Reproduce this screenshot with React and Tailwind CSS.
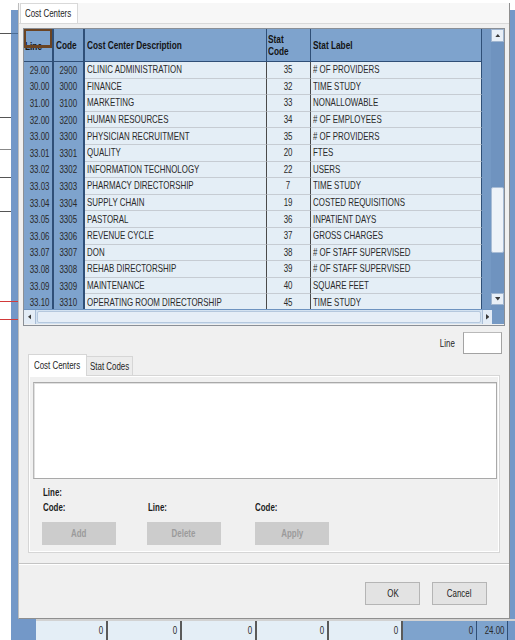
import React from "react";

const rows = [
  ["29.00", "2900", "CLINIC ADMINISTRATION", "35", "# OF PROVIDERS"],
  ["30.00", "3000", "FINANCE", "32", "TIME STUDY"],
  ["31.00", "3100", "MARKETING", "33", "NONALLOWABLE"],
  ["32.00", "3200", "HUMAN RESOURCES", "34", "# OF EMPLOYEES"],
  ["33.00", "3300", "PHYSICIAN RECRUITMENT", "35", "# OF PROVIDERS"],
  ["33.01", "3301", "QUALITY", "20", "FTES"],
  ["33.02", "3302", "INFORMATION TECHNOLOGY", "22", "USERS"],
  ["33.03", "3303", "PHARMACY DIRECTORSHIP", "7", "TIME STUDY"],
  ["33.04", "3304", "SUPPLY CHAIN", "19", "COSTED REQUISITIONS"],
  ["33.05", "3305", "PASTORAL", "36", "INPATIENT DAYS"],
  ["33.06", "3306", "REVENUE CYCLE", "37", "GROSS CHARGES"],
  ["33.07", "3307", "DON", "38", "# OF STAFF SUPERVISED"],
  ["33.08", "3308", "REHAB DIRECTORSHIP", "39", "# OF STAFF SUPERVISED"],
  ["33.09", "3309", "MAINTENANCE", "40", "SQUARE FEET"],
  ["33.10", "3310", "OPERATING ROOM DIRECTORSHIP", "45", "TIME STUDY"],
];

// Narrow text: the grid uses a condensed face, so squeeze regular text horizontally.
function N({ children, o = "left", className = "" }) {
  const origin =
    o === "right" ? "origin-right" : o === "center" ? "origin-center" : "origin-left";
  return (
    <span className={`inline-block whitespace-nowrap scale-x-[0.72] ${origin} ${className}`}>
      {children}
    </span>
  );
}

function Arrow({ dir }) {
  const d = {
    up: "M0 5 L4 0 L8 5 Z",
    down: "M0 0 L8 0 L4 5 Z",
    left: "M5 0 L5 8 L0 4 Z",
    right: "M0 0 L5 4 L0 8 Z",
  }[dir];
  const size = dir === "up" || dir === "down" ? [8, 5] : [5, 8];
  return (
    <svg width={size[0] * 0.7} height={size[1] * 0.7} viewBox={`0 0 ${size[0]} ${size[1]}`}>
      <path d={d} fill="#3a3a3a" />
    </svg>
  );
}

function LeftStrip() {
  return (
    <div className="flex w-[18px] shrink-0">
      <div className="flex w-[11px] flex-col bg-white">
        <div className="h-[34px] border-b border-[#555]" />
        <div className="h-[84px] border-b border-[#555]" />
        <div className="h-[32px] border-b border-[#888]" />
        <div className="h-[28px] border-b border-[#555]" />
        <div className="h-[34px] border-b border-[#555]" />
        <div className="h-[90px] border-b border-[#d23a3a]" />
        <div className="h-[18px] border-b border-[#d23a3a]" />
        <div className="flex-1" />
      </div>
      <div className="flex w-[7px] flex-col">
        <div className="h-[10px] bg-white" />
        <div className="h-[24px] border-b border-[#4b6d96] bg-[#7398c8]" />
        <div className="h-[268px] border-b border-[#d23a3a] bg-[#7398c8]" />
        <div className="h-[18px] border-b border-[#d23a3a] bg-[#7398c8]" />
        <div className="flex-1 bg-[#7398c8]" />
      </div>
    </div>
  );
}

function GridHeader() {
  return (
    <div className="flex h-[33px] shrink-0 border-b border-[#2f4f77] bg-[#7ea3cd] text-[11.5px] font-bold leading-[12px] text-[#141414]">
      <div className="relative flex w-[30px] items-center border-r-2 border-[#2f4f77] pl-[1px] pt-[2px]">
        <N>Line</N>
        <div className="absolute left-0 top-0 h-[19px] w-full border-2 border-b-[3px] border-[#6b4423]" />
      </div>
      <div className="flex w-[31px] items-center border-r-2 border-[#2f4f77] pl-[2px]">
        <N>Code</N>
      </div>
      <div className="flex w-[182px] items-center border-r border-[#2f4f77] pl-[2px]">
        <N>Cost Center Description</N>
      </div>
      <div className="flex w-[44px] flex-col justify-center border-r border-[#2f4f77] pl-[1px]">
        <N>Stat</N>
        <N>Code</N>
      </div>
      <div className="flex w-[171px] items-center border-r border-[#2f4f77] pl-[2px]">
        <N>Stat Label</N>
      </div>
    </div>
  );
}

function GridRow({ r }) {
  return (
    <div className="flex h-[16.6px] shrink-0 text-[11px] leading-none text-[#2a2a2a]">
      <div className="flex w-[30px] items-center justify-end border-r-2 border-[#2f4f77] bg-[#7ea3cd] pr-[2px]">
        <N o="right">{r[0]}</N>
      </div>
      <div className="flex w-[31px] items-center justify-center border-r-2 border-[#2f4f77] bg-[#7ea3cd]">
        <N o="center">{r[1]}</N>
      </div>
      <div className="flex w-[182px] items-center border-b border-r border-b-[#c6ccd3] border-r-[#4a4a4a] bg-[#e4eef6] pl-[2px]">
        <N>{r[2]}</N>
      </div>
      <div className="flex w-[44px] items-center justify-center border-b border-r border-b-[#c6ccd3] border-r-[#4a4a4a] bg-[#e4eef6]">
        <N o="center">{r[3]}</N>
      </div>
      <div className="flex w-[171px] items-center border-b border-r border-b-[#c6ccd3] border-r-[#2f4f77] bg-[#e4eef6] pl-[2px]">
        <N>{r[4]}</N>
      </div>
    </div>
  );
}

function VScroll() {
  return (
    <div className="flex w-[22px] shrink-0 justify-end bg-[#7599c4]">
      <div className="flex w-[13px] flex-col bg-[#6f93bf]">
        <div className="flex h-[13px] items-center justify-center border border-[#9fb5d0] bg-[#e8eff7]">
          <Arrow dir="up" />
        </div>
        <div className="h-[145px]" />
        <div className="h-[66px] rounded-[2px] border border-[#a9bdd6] bg-[#eef3f9]" />
        <div className="h-[40px]" />
        <div className="flex h-[12px] items-center justify-center border border-[#9fb5d0] bg-[#e8eff7]">
          <Arrow dir="down" />
        </div>
      </div>
    </div>
  );
}

function HScroll() {
  return (
    <div className="flex h-[15px] shrink-0 border-t border-[#6d93c0] bg-[#d3e2f1]">
      <div className="flex w-[12px] items-center justify-center border-r border-[#a9bdd6] bg-[#e3ecf6]">
        <Arrow dir="left" />
      </div>
      <div className="m-[1px] flex-1 rounded-[2px] border border-[#b5c8de] bg-[#e6eef7]" />
      <div className="flex w-[10px] items-center justify-center border-l border-[#a9bdd6] bg-[#e3ecf6]">
        <Arrow dir="right" />
      </div>
      <div className="w-[12px] bg-[#7599c4]" />
    </div>
  );
}

function Grid() {
  return (
    <div className="mx-[4px] mt-[4px] flex h-[298px] flex-col border border-[#8a8f96] bg-[#7ea3cd]">
      <div className="flex h-[280px]">
        <div className="flex w-[458px] flex-col overflow-hidden">
          <GridHeader />
          {rows.map((r) => (
            <GridRow key={r[0]} r={r} />
          ))}
        </div>
        <VScroll />
      </div>
      <HScroll />
      <div className="flex-1 bg-[#f0f0f0]" />
    </div>
  );
}

function GrayButton({ children }) {
  return (
    <div className="flex h-[23px] w-[74px] items-center justify-center bg-[#cccccc] text-[11px] text-[#9b9b9b]">
      <N o="center">{children}</N>
    </div>
  );
}

function Panel() {
  return (
    <div className="ml-[9px] mr-[9px] flex h-[178px] flex-col border border-[#d6d6d6] bg-[#f0f0f0]">
      <div className="flex flex-1 flex-col border border-white">
        <div className="ml-[3px] mr-[1px] mt-[5px] h-[97px] border border-[#a9a9a9] border-l-[#b8b8b8] bg-white shadow-[inset_1px_1px_0_#e0e0e0]" />
        <div className="flex flex-col pl-[12px] pt-[6px] text-[11px] font-bold text-[#1c1c1c]">
          <div className="flex h-[15px] items-center pl-[1px]">
            <N>Line:</N>
          </div>
          <div className="flex">
            <div className="flex w-[105px] flex-col">
              <div className="flex h-[15px] items-center pl-[1px]">
                <N>Code:</N>
              </div>
              <div className="mt-[7px]">
                <GrayButton>Add</GrayButton>
              </div>
            </div>
            <div className="flex w-[108px] flex-col">
              <div className="flex h-[15px] items-center pl-[1px]">
                <N>Line:</N>
              </div>
              <div className="mt-[7px]">
                <GrayButton>Delete</GrayButton>
              </div>
            </div>
            <div className="flex flex-col">
              <div className="flex h-[15px] items-center">
                <N>Code:</N>
              </div>
              <div className="mt-[7px]">
                <GrayButton>Apply</GrayButton>
              </div>
            </div>
          </div>
        </div>
      </div>
    </div>
  );
}

function Dialog() {
  return (
    <div className="flex h-[616px] flex-col border-b border-l border-r border-b-[#8f8f8f] border-l-[#bdbdbd] border-r-[#8f8f8f] bg-[#f0f0f0] shadow-[1px_2px_2px_rgba(0,0,0,0.2)]">
      {/* page tab strip */}
      <div className="flex h-[21px] shrink-0 items-end border-b border-[#d9d9d9] bg-[#f7f7f7] pl-[1px]">
        <div className="flex h-[20px] w-[58px] items-center border-l border-r border-t border-[#d9d9d9] bg-white pl-[4px] text-[11px] text-[#1e1e1e]">
          <N>Cost Centers</N>
        </div>
      </div>

      <Grid />

      {/* line entry */}
      <div className="mt-[6px] flex h-[22px] shrink-0 items-center justify-end gap-[8px] pr-[7px] text-[11px] text-[#1e1e1e]">
        <N o="right">Line</N>
        <div className="h-[22px] w-[39px] border border-[#a3a3a3] border-t-[#b9b9b9] bg-white" />
      </div>

      {/* lower tabs */}
      <div className="flex h-[21px] shrink-0 items-end pl-[9px] text-[11px] text-[#1e1e1e]">
        <div className="relative z-10 -mb-[1px] flex h-[22px] w-[59px] items-center border-l border-r border-t border-[#d6d6d6] bg-white pl-[5px]">
          <N>Cost Centers</N>
        </div>
        <div className="flex h-[19px] w-[46px] items-center border-r border-t border-[#d6d6d6] bg-[#ececec] pl-[3px]">
          <N>Stat Codes</N>
        </div>
      </div>

      <Panel />

      <div className="h-[10px] shrink-0" />

      {/* footer */}
      <div className="flex flex-1 justify-end gap-[12px] border-t border-[#c4c4c4] pr-[22px] pt-[18px] shadow-[inset_0_1px_0_#ffffff]">
        <div className="flex h-[23px] w-[55px] items-center justify-center border border-[#b5b5b5] bg-[#e3e3e3] text-[11px] text-[#1e1e1e]">
          <N o="center">OK</N>
        </div>
        <div className="flex h-[23px] w-[55px] items-center justify-center border border-[#b5b5b5] bg-[#e3e3e3] text-[11px] text-[#1e1e1e]">
          <N o="center">Cancel</N>
        </div>
      </div>
    </div>
  );
}

function BottomRow() {
  const light = [72, 74, 75, 72, 74];
  return (
    <div className="flex h-[21px] shrink-0 text-[11px] leading-none text-[#2a2a2a]">
      <div className="w-[11px] bg-white" />
      <div className="w-[25px] bg-[#7398c8]" />
      <div className="flex flex-1 border-t-2 border-[#d2d2d2]">
        {light.map((w, i) => (
          <div
            key={i}
            style={{ width: w }}
            className="flex items-center justify-end border-r-2 border-[#5a5a5a] bg-[#e4eef6] pr-[3px]"
          >
            <N o="right">0</N>
          </div>
        ))}
        <div className="flex w-[74px] items-center justify-end border-r border-[#2f4f77] bg-[#7ea3cd] pr-[3px]">
          <N o="right">0</N>
        </div>
        <div className="flex w-[31px] items-center justify-end border-r border-[#2f4f77] bg-[#7ea3cd] pr-[2px]">
          <N o="right">24.00</N>
        </div>
        <div className="flex-1 bg-[#7398c8]" />
      </div>
    </div>
  );
}

export default function App() {
  return (
    <div className="flex h-[640px] w-[515px] flex-col overflow-hidden bg-white font-['Liberation_Sans',Arial,sans-serif]">
      <div className="flex h-[619px] shrink-0">
        <LeftStrip />
        <div className="flex w-[492px] shrink-0 flex-col">
          <div className="h-[3px] bg-white" />
          <Dialog />
        </div>
        <div className="flex w-[5px] flex-col">
          <div className="h-[10px] bg-white" />
          <div className="flex-1 bg-[#7398c8]" />
        </div>
      </div>
      <BottomRow />
    </div>
  );
}
